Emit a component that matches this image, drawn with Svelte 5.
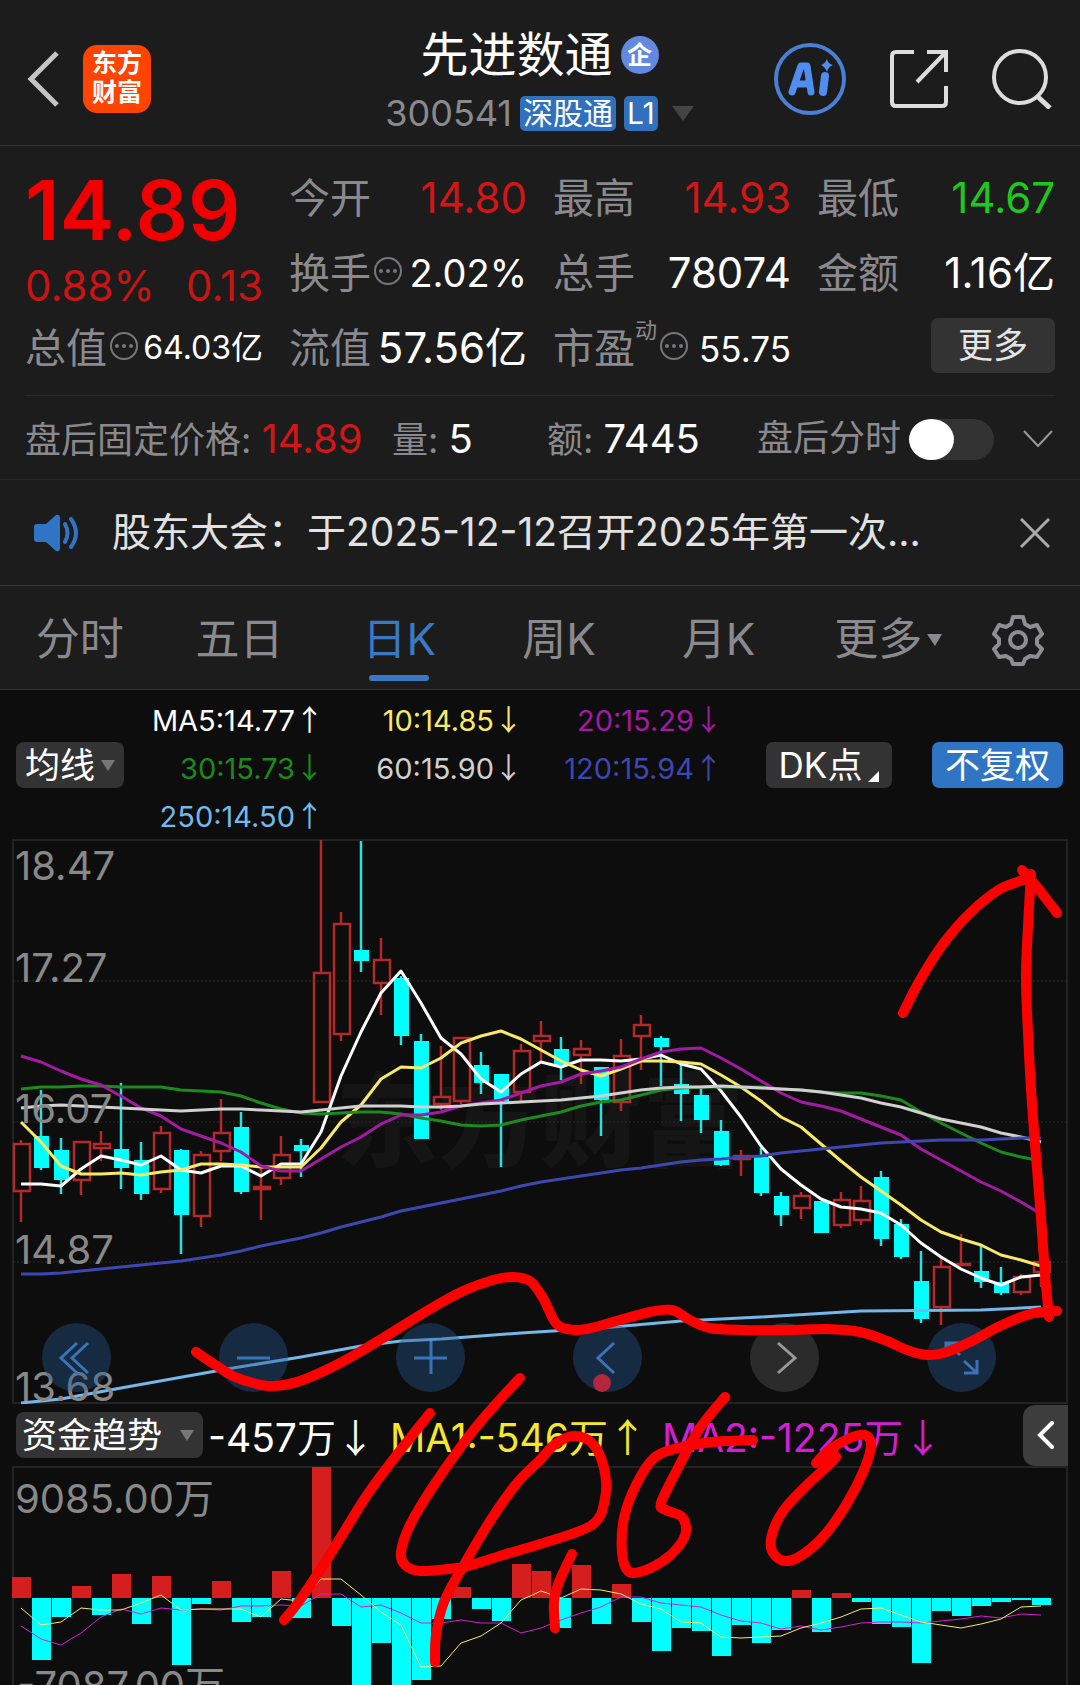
<script lang="ts">
	type Point = [number, number];
	// direction (1 up, 0 down), high, body top, body bottom, low
	type Candle = [number, number, number, number, number];

	const STEP = 20;
	const FIRST = 21;
	const ZERO = 131;

	let afterHours = $state(false);
	let noticeOpen = $state(true);
	let activeTab = $state('日K');

	const tabs = ['分时', '五日', '日K', '周K', '月K'];

	const averages = [
		{ text: 'MA5:14.77', arrow: '↑', tone: 'white' },
		{ text: '10:14.85', arrow: '↓', tone: 'yellow' },
		{ text: '20:15.29', arrow: '↓', tone: 'purple' },
		{ text: '30:15.73', arrow: '↓', tone: 'green' },
		{ text: '60:15.90', arrow: '↓', tone: 'silver' },
		{ text: '120:15.94', arrow: '↑', tone: 'blue' },
		{ text: '250:14.50', arrow: '↑', tone: 'sky' }
	];

	const priceLabels = [
		{ text: '18.47', y: 41 },
		{ text: '17.27', y: 143 },
		{ text: '16.07', y: 284 },
		{ text: '14.87', y: 425 },
		{ text: '13.68', y: 562 }
	];

	const candles: Candle[] = [
		[1, 301, 304, 353, 383], [0, 251, 297, 329, 331], [0, 299, 311, 341, 355], [1, 302, 302, 342, 356],
		[1, 292, 304, 310, 322], [0, 244, 310, 329, 350], [0, 303, 321, 355, 361], [1, 287, 293, 351, 354],
		[0, 310, 311, 376, 415], [1, 312, 315, 378, 388], [1, 260, 293, 313, 322], [0, 273, 288, 353, 355],
		[1, 326, 347, 351, 381], [1, 297, 315, 340, 346], [0, 300, 306, 312, 338], [1, 1, 133, 264, 264],
		[1, 73, 84, 196, 202], [0, 2, 111, 122, 133], [1, 99, 120, 145, 176], [0, 137, 139, 197, 206],
		[0, 195, 202, 300, 300], [1, 207, 257, 266, 271], [1, 198, 198, 263, 265], [0, 213, 226, 244, 255],
		[0, 235, 235, 262, 328], [1, 205, 211, 254, 262], [1, 182, 196, 203, 222], [0, 198, 210, 226, 241],
		[1, 201, 209, 217, 245], [0, 228, 228, 261, 297], [1, 200, 216, 264, 272], [1, 176, 185, 198, 231],
		[0, 197, 199, 208, 247], [0, 224, 245, 255, 282], [0, 250, 256, 281, 294], [0, 281, 292, 326, 327],
		[1, 311, 316, 321, 337], [0, 309, 318, 354, 357], [0, 353, 357, 376, 387], [1, 353, 356, 370, 380],
		[0, 362, 362, 394, 394], [1, 353, 360, 387, 389], [1, 347, 361, 382, 386], [0, 332, 338, 400, 407],
		[0, 380, 385, 418, 420], [0, 412, 442, 480, 484], [1, 418, 427, 469, 486], [1, 395, 424, 427, 427],
		[0, 405, 432, 443, 449], [0, 428, 443, 454, 456], [1, 435, 437, 454, 456], [1, 420, 422, 434, 448]
	];

	const priceLines = [
		{
			tone: 'white',
			values: [345, 345, 347, 330, 317, 321, 326, 317, 331, 334, 327, 327, 337, 325, 325, 293, 237, 193, 154, 132, 164, 199, 215, 240, 253, 235, 223, 228, 221, 221, 222, 220, 216, 225, 230, 252, 278, 307, 330, 346, 360, 368, 370, 374, 386, 404, 418, 430, 439, 446, 438, 436]
		},
		{
			tone: 'yellow',
			values: [283, 303, 327, 335, 335, 334, 336, 333, 331, 325, 325, 326, 328, 328, 328, 309, 283, 266, 240, 228, 229, 219, 204, 197, 192, 200, 211, 222, 231, 237, 230, 222, 222, 223, 225, 236, 248, 262, 278, 288, 305, 322, 338, 352, 366, 381, 393, 400, 406, 416, 421, 427]
		},
		{
			tone: 'green',
			values: [250, 248, 248, 247, 247, 248, 248, 248, 251, 252, 253, 257, 264, 270, 274, 275, 274, 273, 273, 275, 279, 282, 286, 287, 286, 281, 277, 273, 267, 263, 261, 256, 251, 249, 248, 248, 248, 248, 250, 251, 253, 254, 254, 257, 261, 273, 284, 294, 304, 313, 318, 322]
		},
		{
			tone: 'purple',
			values: [217, 223, 232, 240, 246, 257, 269, 277, 290, 297, 304, 313, 327, 332, 332, 320, 308, 298, 285, 276, 276, 273, 267, 264, 261, 254, 247, 243, 235, 232, 228, 220, 213, 210, 209, 219, 230, 242, 254, 263, 267, 272, 280, 288, 296, 310, 321, 332, 343, 352, 363, 375]
		},
		{
			tone: 'silver',
			values: [269, 267, 266, 267, 268, 269, 270, 271, 272, 271, 270, 270, 271, 272, 273, 271, 269, 267, 267, 267, 268, 268, 267, 265, 264, 263, 262, 261, 259, 257, 254, 251, 249, 248, 248, 247, 248, 249, 250, 251, 253, 256, 259, 264, 268, 274, 280, 284, 288, 294, 298, 303]
		},
		{
			tone: 'blue',
			values: [435, 435, 434, 432, 430, 428, 426, 424, 422, 419, 416, 412, 407, 403, 399, 394, 388, 383, 378, 372, 368, 364, 360, 356, 352, 347, 343, 340, 337, 334, 331, 329, 326, 323, 321, 320, 318, 317, 314, 312, 310, 308, 306, 304, 303, 302, 301, 301, 301, 300, 299, 299]
		}
	];

	const yearLine: Point[] = [
		[21, 564], [61, 560], [121, 549], [227, 530], [301, 518], [361, 507], [401, 502], [441, 500],
		[521, 494], [601, 489], [681, 482], [761, 478], [861, 472], [981, 471], [1041, 468]
	];

	const flows = [21, -62, -19, 12, -17, 24, -26, 22, -67, -6, 17, -24, -19, 27, -20, 131, -28, -95, -45, -95, -82, -21, 11, -11, -23, 34, 27, -30, 33, -26, 14, -24, -53, -30, -33, -58, -27, -45, -32, 8, -34, 5, -4, -26, -29, -65, -13, -18, -8, -4, -2, -7];

	const flowLines = [
		{
			tone: 'magenta',
			values: [159, 172, 178, 166, 150, 142, 147, 141, 143, 142, 143, 139, 139, 138, 139, 127, 127, 140, 138, 146, 156, 156, 153, 156, 156, 166, 161, 153, 146, 140, 130, 130, 136, 138, 140, 148, 154, 156, 162, 159, 163, 160, 156, 155, 155, 156, 154, 152, 149, 151, 147, 148]
		},
		{
			tone: 'yellow',
			values: [141, 158, 155, 141, 143, 143, 136, 128, 143, 142, 142, 142, 150, 132, 134, 112, 112, 128, 145, 158, 200, 199, 176, 169, 156, 133, 124, 131, 122, 123, 127, 137, 142, 155, 156, 170, 171, 170, 169, 161, 156, 150, 142, 141, 148, 155, 158, 161, 157, 152, 140, 139]
		}
	];

	// Freehand pen strokes
	const strokes: Point[][] = [
		[[196, 513], [217, 527], [233, 537], [253, 544], [273, 547], [300, 542], [340, 524], [383, 499], [430, 470], [463, 452], [493, 441], [513, 438], [530, 442], [543, 459], [555, 483], [567, 490], [587, 490], [620, 481], [650, 473], [672, 471], [690, 481], [710, 489], [743, 491], [787, 491], [827, 490], [860, 493], [887, 502], [907, 511], [927, 516], [947, 513], [970, 503], [1000, 487], [1030, 475], [1057, 472]],
		[[1031, 35], [1028, 87], [1026, 139], [1028, 194], [1031, 250], [1035, 305], [1041, 379], [1045, 435], [1049, 478]],
		[[903, 174], [920, 141], [943, 105], [970, 74], [1000, 50], [1030, 39]],
		[[1022, 31], [1037, 48], [1057, 74]],
		[[430, 574], [389, 626], [365, 659], [331, 714], [300, 761], [284, 781]],
		[[520, 539], [504, 556], [472, 593], [434, 646], [410, 686], [401, 713], [405, 726], [420, 732], [448, 730], [468, 727], [506, 715], [540, 705], [592, 686], [605, 659], [604, 629], [592, 604], [573, 597], [554, 606], [540, 621], [517, 644], [492, 679], [465, 724], [444, 763], [436, 796], [435, 823]],
		[[572, 715], [559, 743], [554, 763], [555, 789]],
		[[725, 558], [700, 589], [678, 629], [661, 664], [666, 671], [681, 677], [686, 688], [683, 701], [667, 719], [643, 732], [628, 732], [622, 713], [624, 679], [636, 646], [654, 619], [678, 609], [712, 603], [753, 601]],
		[[816, 624], [836, 618], [809, 644], [786, 668], [774, 689], [771, 709], [781, 721], [797, 719], [822, 699], [846, 666], [864, 631], [871, 606], [865, 596], [850, 599], [829, 611], [816, 624]]
	];

	function xAt(i: number): number {
		return FIRST + i * STEP;
	}

	function toPoints(values: number[]): string {
		return values.map((y, i) => `${xAt(i)},${y}`).join(' ');
	}

	// Catmull-Rom spline through the points
	function smooth(p: Point[]): string {
		let d = `M${p[0][0]} ${p[0][1]}`;
		for (let i = 0; i < p.length - 1; i++) {
			const a = p[i - 1] ?? p[i];
			const b = p[i];
			const c = p[i + 1];
			const e = p[i + 2] ?? c;
			d += `C${b[0] + (c[0] - a[0]) / 6} ${b[1] + (c[1] - a[1]) / 6} ${c[0] - (e[0] - b[0]) / 6} ${c[1] - (e[1] - b[1]) / 6} ${c[0]} ${c[1]}`;
		}
		return d;
	}
</script>

{#snippet info()}
	<svg class="info" viewBox="0 0 30 30" aria-hidden="true">
		<circle cx="15" cy="15" r="13" fill="none" stroke="#77777b" stroke-width="2" />
		<circle cx="8" cy="15" r="2" fill="#77777b" />
		<circle cx="15" cy="15" r="2" fill="#77777b" />
		<circle cx="22" cy="15" r="2" fill="#77777b" />
	</svg>
{/snippet}

<div class="page">
	<header class="top">
		<div class="top-left">
			<button class="icon-button" aria-label="返回">
				<svg class="back" width="32" height="56" viewBox="0 0 32 56">
					<path d="M30 2 4 28l26 26" fill="none" stroke="#c4c4c4" stroke-width="5" />
				</svg>
			</button>
			<a class="logo" href="#home">东方<br />财富</a>
		</div>
		<div class="title">
			<h1>先进数通<span class="badge">企</span></h1>
			<div class="code">
				<span>300541</span>
				<span class="tag">深股通</span>
				<span class="tag">L1</span>
				<svg class="code-arrow" width="22" height="15" viewBox="0 0 22 15"><path d="M0 0h22L11 15z" fill="#444" /></svg>
			</div>
		</div>
		<div class="top-right">
			<button class="icon-button ai" aria-label="AI 助手">
				<svg width="72" height="72" viewBox="0 0 72 72">
					<circle cx="36" cy="36" r="34" fill="none" stroke="#4a80d4" stroke-width="4" />
					<path d="M18 49 27 23h6l4 26M22 41h13" fill="none" stroke="#4f8df0" stroke-width="7" stroke-linejoin="round" stroke-linecap="round" />
					<path d="M51 33 49 49" stroke="#4f8df0" stroke-width="8" stroke-linecap="round" />
					<path d="M53 16q1 5 6 6-5 2-6 7-2-5-6-7 4-1 6-6z" fill="#4f8df0" />
				</svg>
			</button>
			<button class="icon-button" aria-label="分享">
				<svg width="58" height="58" viewBox="0 0 58 58" fill="none" stroke="#ddd" stroke-width="4">
					<path d="M24 2H6q-4 0-4 4v46q0 4 4 4h46q4 0 4-4V36M37 2h19v20M56 2 27 32" />
				</svg>
			</button>
			<button class="icon-button" aria-label="搜索">
				<svg width="60" height="60" viewBox="0 0 60 60" fill="none" stroke="#ddd" stroke-width="4">
					<circle cx="28" cy="28" r="26" />
					<path d="m45 47 13 12" stroke-width="5" />
				</svg>
			</button>
		</div>
	</header>

	<section class="quote">
		<div class="main-price">
			<div class="price">14.89</div>
			<div class="change"><span>0.88%</span><span>0.13</span></div>
		</div>
		<div class="metric"><span>今开</span><b class="up">14.80</b></div>
		<div class="metric"><span>最高</span><b class="up">14.93</b></div>
		<div class="metric"><span>最低</span><b class="down">14.67</b></div>
		<div class="metric"><span>换手{@render info()}</span><b class="medium">2.02%</b></div>
		<div class="metric"><span>总手</span><b>78074</b></div>
		<div class="metric"><span>金额</span><b>1.16亿</b></div>
		<div class="metric"><span>总值{@render info()}</span><b class="small">64.03亿</b></div>
		<div class="metric"><span>流值</span><b>57.56亿</b></div>
		<div class="metric"><span>市盈<sup>动</sup>{@render info()}</span><b class="compact">55.75</b></div>
		<div class="metric end"><button class="more">更多</button></div>
	</section>

	<section class="after">
		<div>盘后固定价格: <b class="up">14.89</b></div>
		<div>量: <b>5</b></div>
		<div>额: <b>7445</b></div>
		<label class="switch">
			盘后分时
			<input type="checkbox" bind:checked={afterHours} />
		</label>
		<button class="icon-button" aria-label="展开">
			<svg width="30" height="18" viewBox="0 0 30 18"><path d="m1 1 14 15L29 1" fill="none" stroke="#999" stroke-width="2" /></svg>
		</button>
	</section>

	{#if noticeOpen}
		<section class="notice">
			<svg width="46" height="38" viewBox="0 0 46 38">
				<path d="M3 10h9L22 1q4-1 4 3v30q0 4-4 3l-10-9H3q-3 0-3-3V13q0-3 3-3z" fill="#2f74c5" />
				<path d="M31 10q5 9 0 18M37 5q10 14 0 28" fill="none" stroke="#2f74c5" stroke-width="4" stroke-linecap="round" />
			</svg>
			<a href="#notice">股东大会：于2025-12-12召开2025年第一次...</a>
			<button class="icon-button" aria-label="关闭" onclick={() => (noticeOpen = false)}>
				<svg width="30" height="30" viewBox="0 0 30 30"><path d="m1 1 28 28M29 1 1 29" stroke="#aaa" stroke-width="3" /></svg>
			</button>
		</section>
	{/if}

	<nav class="tabs">
		{#each tabs as tab}
			<button class:active={tab === activeTab} onclick={() => (activeTab = tab)}>{tab}</button>
		{/each}
		<button aria-haspopup="menu">
			更多<svg class="tab-arrow" width="15" height="12" viewBox="0 0 15 12"><path d="M0 0h15L8 12z" fill="#8a8a8e" /></svg>
		</button>
		<button aria-label="设置">
			<svg width="52" height="52" viewBox="0 0 52 52" fill="none" stroke="#8f8f93" stroke-width="4" stroke-linejoin="round">
				<path d="M21 3h10l2 7 5 3 7-2 5 9-5 5v5l5 5-5 8-7-1-5 3-2 5H21l-2-5-5-3-7 1-5-8 5-5v-5l-5-5 5-9 7 2 5-3z" />
				<circle cx="26" cy="26" r="8" />
			</svg>
		</button>
	</nav>

	<section class="legend">
		<label class="picker">
			<select aria-label="主图指标">
				<option>均线</option>
				<option>布林</option>
			</select>
			<svg width="14" height="11" viewBox="0 0 14 11"><path d="M0 0h14L7 11z" fill="#777" /></svg>
		</label>
		<div class="averages">
			{#each averages as average}
				<span class={average.tone}>{average.text}<i>{average.arrow}</i></span>
			{/each}
		</div>
		<button class="chip dk">DK点<svg width="11" height="11" viewBox="0 0 11 11"><path d="M11 0v11H0z" fill="#fff" /></svg></button>
		<button class="chip primary">不复权</button>
	</section>

	<main class="charts">
		<div class="stage">
			<svg class="plot" viewBox="0 0 1080 565" role="img" aria-label="日K线图">
				<text class="watermark" x="336" y="320">东方财富</text>
				<rect class="frame" x="13" y="1" width="1054" height="563" />
				{#each [142, 283, 423] as y}
					<line class="grid" x1="13" x2="1067" y1={y} y2={y} />
				{/each}
				{#each candles as [up, high, top, bottom, low], i}
					{#if up}
						<path class="rise" d="M{xAt(i)} {high}V{top}M{xAt(i)} {bottom}V{low}M{xAt(i) - 7} {top + 1}h16V{bottom - 1}h-16z" />
					{:else}
						<path class="fall" d="M{xAt(i)} {high}V{low}" />
						<rect x={xAt(i) - 7} y={top} width="15" height={bottom - top} fill="#00ffff" />
					{/if}
				{/each}
				{#each priceLines as line}
					<polyline class="average {line.tone}" points={toPoints(line.values)} />
				{/each}
				<polyline class="average sky" points={yearLine.join(' ')} />
				{#each priceLabels as label}
					<text class="scale" x="15" y={label.y}>{label.text}</text>
				{/each}
			</svg>
			<div class="controls">
				<button aria-label="最左">
					<svg viewBox="0 0 69 69"><path d="M35 20 19 35l16 15M46 20 30 35l16 15" /></svg>
				</button>
				<button aria-label="缩小">
					<svg viewBox="0 0 69 69"><path d="M18 35h33" /></svg>
				</button>
				<button aria-label="放大">
					<svg viewBox="0 0 69 69"><path d="M18 35h33M35 18v33" /></svg>
				</button>
				<button aria-label="向左">
					<svg viewBox="0 0 69 69"><path d="M41 20 25 35l16 15" /><circle cx="29" cy="60" r="9" fill="#b4283e" stroke="none" /></svg>
				</button>
				<button class="off" aria-label="向右">
					<svg viewBox="0 0 69 69"><path d="m28 20 17 15-17 15" /></svg>
				</button>
				<button aria-label="全屏">
					<svg viewBox="0 0 69 69"><path d="M19 32V20h14M20 20l13 12M37 38l13 12M37 50h13V37" /></svg>
				</button>
			</div>
		</div>

		<div class="fund">
			<label class="picker wide">
				<select aria-label="副图指标">
					<option>资金趋势</option>
					<option>主力资金</option>
				</select>
				<svg width="14" height="11" viewBox="0 0 14 11"><path d="M0 0h14L7 11z" fill="#777" /></svg>
			</label>
			<span class="white">-457万<i>↓</i></span>
			<span class="bright">MA1:-546万<i>↑</i></span>
			<span class="magenta">MA2:-1225万<i>↓</i></span>
			<button class="drawer" aria-label="展开侧栏">
				<svg width="18" height="28" viewBox="0 0 18 28"><path d="M15 2 3 14l12 12" fill="none" stroke="#fff" stroke-width="4" stroke-linecap="round" /></svg>
			</button>
		</div>

		<svg class="plot" viewBox="0 -1 1080 219" role="img" aria-label="资金趋势图">
			<path class="frame" d="M13 230V0h1054v230" />
			{#each flows as flow, i}
				<rect
					x={xAt(i) - 9}
					y={flow > 0 ? ZERO - flow : ZERO}
					width="19"
					height={Math.abs(flow)}
					fill={flow > 0 ? '#d51f1f' : '#00ffff'}
				/>
			{/each}
			{#each flowLines as line}
				<polyline class="flow {line.tone}" points={toPoints(line.values)} />
			{/each}
			<text class="scale" x="15" y="46">9085.00万</text>
			<text class="scale" x="17" y="233">-7087.00万</text>
		</svg>

		<svg class="pen" viewBox="0 0 1080 846" aria-hidden="true">
			{#each strokes as stroke}
				<path d={smooth(stroke)} />
			{/each}
		</svg>
	</main>
</div>

<style>
	:global(body) {
		background: #0d0d0d;
	}

	.page {
		font-family: Inter, 'Noto Sans CJK SC', sans-serif;
		line-height: 1.2;
		background: #1c1c1c;
		color: #fff;
		overflow: hidden;
	}

	button,
	select {
		font: inherit;
		color: inherit;
		background: none;
		border: none;
		padding: 0;
		margin: 0;
		cursor: pointer;
	}

	a {
		color: inherit;
		text-decoration: none;
	}

	b,
	i {
		font-weight: 400;
		font-style: normal;
	}

	svg {
		display: block;
		flex-shrink: 0;
	}

	.icon-button {
		display: flex;
	}

	.top {
		display: grid;
		grid-template-columns: 1fr auto 1fr;
		height: 145px;
		padding: 0 28px 0 27px;
		border-bottom: 1px solid #333;
	}

	.top-left,
	.top-right {
		display: flex;
		align-items: center;
		padding-top: 12px;
	}

	.top-left {
		gap: 24px;
	}

	.top-right {
		justify-content: flex-end;
		gap: 44px;
	}

	.logo {
		width: 68px;
		height: 68px;
		border-radius: 14px;
		background: #ff4400;
		font-size: 25px;
		font-weight: 700;
		line-height: 29px;
		text-align: center;
		padding-top: 4px;
		box-sizing: border-box;
	}

	.title {
		display: flex;
		flex-direction: column;
		align-items: center;
		padding-top: 25px;
	}

	h1 {
		display: flex;
		align-items: center;
		gap: 8px;
		margin: 0;
		font-size: 48px;
		font-weight: 400;
		line-height: 60px;
	}

	.badge {
		width: 38px;
		height: 38px;
		border-radius: 50%;
		background: #6288e0;
		font-size: 25px;
		font-weight: 700;
		line-height: 38px;
		text-align: center;
	}

	.code {
		display: flex;
		align-items: center;
		gap: 8px;
		margin-top: 5px;
		font-size: 36px;
		line-height: 46px;
		color: #8a8a8e;
	}

	.tag {
		padding: 0 3px;
		border-radius: 5px;
		background: #3070bc;
		color: #fff;
		font-size: 30px;
		line-height: 35px;
	}

	.code-arrow {
		margin-left: 6px;
	}

	.quote {
		display: grid;
		grid-template-columns: repeat(4, minmax(0, 1fr));
		grid-auto-rows: 75px;
		column-gap: 26px;
		margin: 0 25px;
		padding: 15px 0 9px;
		border-bottom: 1px solid #2a2a2a;
	}

	.main-price {
		grid-row: span 2;
		white-space: nowrap;
	}

	.price {
		font-size: 82px;
		font-weight: 600;
		line-height: 100px;
		color: #f00000;
	}

	.change {
		display: flex;
		justify-content: space-between;
		font-size: 42px;
		line-height: 50px;
		color: #c81414;
	}

	.metric {
		display: flex;
		align-items: center;
		justify-content: space-between;
		font-size: 42px;
		white-space: nowrap;
	}

	.metric span {
		display: flex;
		align-items: center;
		font-size: 41px;
		color: #8a8a8e;
	}

	.metric sup {
		align-self: flex-start;
		font-size: 22px;
		line-height: 12px;
	}

	.metric .medium {
		font-size: 38px;
	}

	.metric .compact {
		font-size: 35px;
	}

	.metric .small {
		font-size: 32px;
	}

	.metric.end {
		justify-content: flex-end;
	}

	.info {
		width: 30px;
		height: 30px;
		margin: 0 2px 6px;
	}

	.up {
		color: #d01616;
	}

	.down {
		color: #1ec81e;
	}

	.more {
		width: 124px;
		height: 55px;
		margin-bottom: 6px;
		border-radius: 7px;
		background: #333;
		color: #e4e4e4;
		font-size: 35px;
		line-height: 55px;
	}

	.after {
		display: grid;
		grid-template-columns: 367fr 155fr 210fr 266fr 30fr;
		align-items: center;
		height: 80px;
		padding: 3px 27px 0 25px;
		border-bottom: 1px solid #262626;
		font-size: 36px;
		color: #8a8a8e;
		white-space: nowrap;
	}

	.after b {
		font-size: 40px;
		color: #fff;
	}

	.after b.up {
		color: #d01616;
	}

	.switch {
		display: flex;
		align-items: center;
		gap: 8px;
	}

	.switch input {
		appearance: none;
		width: 85px;
		height: 41px;
		margin: 0;
		border-radius: 21px;
		background: #333;
	}

	.switch input::before {
		content: '';
		display: block;
		width: 45px;
		height: 41px;
		border-radius: 50%;
		background: #fff;
	}

	.switch input:checked {
		background: #3074c4;
	}

	.switch input:checked::before {
		margin-left: 40px;
	}

	.notice {
		display: flex;
		align-items: center;
		height: 105px;
		padding: 0 30px 0 34px;
		border-bottom: 1px solid #363636;
	}

	.notice a {
		flex: 1;
		margin: 0 32px;
		font-size: 39px;
		color: #e2e2e2;
		white-space: nowrap;
	}

	.tabs {
		display: grid;
		grid-template-columns: repeat(6, 4fr) 3fr;
		height: 103px;
		padding-right: 2px;
		border-bottom: 1px solid #363636;
	}

	.tabs button {
		display: flex;
		align-items: center;
		justify-content: center;
		position: relative;
		padding-top: 4px;
		font-size: 44px;
		color: #8a8a8e;
	}

	.tabs .active {
		color: #3a78c3;
	}

	.tabs .active::after {
		content: '';
		position: absolute;
		bottom: 8px;
		width: 60px;
		height: 6px;
		border-radius: 3px;
		background: #3a78c3;
	}

	.tab-arrow {
		margin: 0 -20px 0 5px;
	}

	.legend {
		display: flex;
		align-items: center;
		padding: 3px 17px 2px 16px;
		background: #0d0d0d;
	}

	.picker {
		display: flex;
		align-items: center;
		justify-content: space-between;
		box-sizing: border-box;
		width: 108px;
		height: 46px;
		padding: 0 9px;
		border-radius: 8px;
		background: #333;
		font-size: 35px;
	}

	.picker select {
		appearance: none;
		line-height: 46px;
	}

	.picker.wide {
		width: 187px;
		padding: 0 9px 0 6px;
	}

	.averages {
		display: grid;
		grid-template-columns: 200px 199px 200px;
		grid-auto-rows: 48px;
		font-size: 29px;
		line-height: 50px;
		text-align: right;
		white-space: nowrap;
	}

	.averages i,
	.fund i {
		font-family: 'Noto Sans CJK SC', sans-serif;
	}

	.chip {
		display: flex;
		align-items: center;
		justify-content: center;
		height: 46px;
		border-radius: 7px;
		background: #333;
		font-size: 35px;
		line-height: 46px;
		white-space: nowrap;
	}

	.dk {
		width: 126px;
		margin: 0 40px 0 auto;
		gap: 6px;
	}

	.dk svg {
		align-self: flex-end;
		margin-bottom: 6px;
	}

	.primary {
		width: 131px;
		background: #3074c4;
	}

	.charts {
		position: relative;
		background: #0d0d0d;
	}

	.stage {
		position: relative;
	}

	.plot {
		width: 100%;
		height: auto;
	}

	.frame {
		fill: none;
		stroke: #232323;
		stroke-width: 2;
	}

	.grid {
		stroke: #2a2a2a;
		stroke-width: 1;
		stroke-dasharray: 2 2;
	}

	.watermark {
		font-size: 102px;
		font-weight: 900;
		fill: #151515;
	}

	.scale {
		font-size: 40px;
		fill: #888;
	}

	.rise {
		fill: none;
		stroke: #b42a2a;
		stroke-width: 2.5;
	}

	.fall {
		stroke: #2fdede;
		stroke-width: 2.5;
	}

	.average {
		fill: none;
		stroke: currentColor;
		stroke-width: 3;
		stroke-linejoin: round;
	}

	.flow {
		fill: none;
		stroke: currentColor;
		stroke-width: 1;
	}

	.white {
		color: #fff;
	}

	.yellow {
		color: #f9e96b;
	}

	.purple {
		color: #a31aa3;
	}

	.green {
		color: #1c8a1c;
	}

	.silver {
		color: #d0d0d0;
	}

	.blue {
		color: #3d47b0;
	}

	.sky {
		color: #74b8ea;
	}

	.bright {
		color: #f6e72d;
	}

	.magenta {
		color: #d31fd3;
	}

	.controls {
		position: absolute;
		left: 0;
		right: 0;
		bottom: 12px;
		display: flex;
		justify-content: space-between;
		padding: 0 84px 0 42px;
	}

	.controls button {
		width: 69px;
		height: 69px;
		border-radius: 50%;
		background: rgba(38, 88, 148, 0.4);
	}

	.controls .off {
		background: rgba(90, 90, 90, 0.4);
	}

	.controls path {
		fill: none;
		stroke: #3a74b8;
		stroke-width: 3;
	}

	.controls .off path {
		stroke: #999;
	}

	.fund {
		display: flex;
		align-items: center;
		height: 62px;
		padding: 0 12px 0 16px;
		font-size: 39px;
		white-space: nowrap;
	}

	.fund span {
		margin-left: 5px;
		padding-top: 3px;
	}

	.fund span + span {
		margin-left: 15px;
	}

	.drawer {
		display: flex;
		align-items: center;
		justify-content: center;
		width: 45px;
		height: 61px;
		margin-left: auto;
		border-radius: 12px 0 0 12px;
		background: #3d3d3d;
	}

	.pen {
		position: absolute;
		top: 0;
		left: 0;
		width: 100%;
	}

	.pen path {
		fill: none;
		stroke: #f00;
		stroke-width: 10;
		stroke-linecap: round;
		stroke-linejoin: round;
	}
</style>
